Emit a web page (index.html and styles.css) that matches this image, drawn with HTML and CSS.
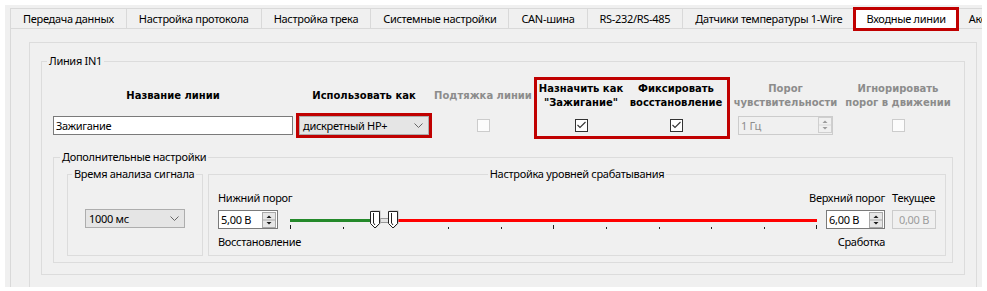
FILE: index.html
```html
<!DOCTYPE html>
<html lang="ru">
<head>
<meta charset="utf-8">
<title>Входные линии</title>
<link rel="stylesheet" href="styles.css">
</head>
<body>
<div class="window">
  <div class="tabs">
    <div class="tab">Передача данных</div>
    <div class="tab">Настройка протокола</div>
    <div class="tab">Настройка трека</div>
    <div class="tab">Системные настройки</div>
    <div class="tab">CAN-шина</div>
    <div class="tab">RS-232/RS-485</div>
    <div class="tab">Датчики температуры 1-Wire</div>
    <div class="tab active">Входные линии</div>
    <div class="tab">Акселерометр</div>
  </div>
  <div class="panel">
    <div class="frame">
      <fieldset class="group in1">
        <legend>Линия IN1</legend>
        <div class="in1-body">
          <div class="line-row">
            <div class="col c-name">
              <div class="hdr">Название линии</div>
              <div class="ctl"><div class="textbox">Зажигание</div></div>
            </div>
            <div class="col c-use">
              <div class="hdr">Использовать как</div>
              <div class="ctl">
                <div class="combo marked">
                  <span>дискретный НР+</span>
                  <svg class="chev" width="9" height="5" viewBox="0 0 9 5"><polyline points="0.5,0.5 4.5,4.5 8.5,0.5" fill="none" stroke="#666" stroke-width="1"/></svg>
                </div>
              </div>
            </div>
            <div class="col c-pull">
              <div class="hdr dis">Подтяжка линии</div>
              <div class="ctl"><div class="check disabled"></div></div>
            </div>
            <div class="hl-box">
              <div class="col c-ign">
                <div class="hdr">Назначить как<br>"Зажигание"</div>
                <div class="ctl">
                  <div class="check on"><svg width="11" height="11" viewBox="0 0 11 11"><polyline points="1.5,5 4,7.5 9.5,2" fill="none" stroke="#333" stroke-width="1.1"/></svg></div>
                </div>
              </div>
              <div class="col c-fix">
                <div class="hdr">Фиксировать<br>восстановление</div>
                <div class="ctl">
                  <div class="check on"><svg width="11" height="11" viewBox="0 0 11 11"><polyline points="1.5,5 4,7.5 9.5,2" fill="none" stroke="#333" stroke-width="1.1"/></svg></div>
                </div>
              </div>
            </div>
            <div class="col c-sens">
              <div class="hdr dis">Порог<br>чувствительности</div>
              <div class="ctl">
                <div class="spin disabled">
                  <span class="val">1 Гц</span>
                  <svg class="spin-btn" width="14" height="16" viewBox="0 0 14 16"><rect x="0.5" y="0.5" width="13" height="15" fill="#f0f0f0" stroke="#cfcfcf"/><line x1="1" y1="8" x2="13" y2="8" stroke="#d8d8d8"/><polygon points="4.5,6 9.5,6 7,3.5" fill="#9a9a9a"/><polygon points="4.5,10 9.5,10 7,12.5" fill="#9a9a9a"/></svg>
                </div>
              </div>
            </div>
            <div class="col c-ignm">
              <div class="hdr dis">Игнорировать<br>порог в движении</div>
              <div class="ctl"><div class="check disabled"></div></div>
            </div>
          </div>

          <fieldset class="group extra">
            <legend>Дополнительные настройки</legend>
            <div class="extra-body">
              <fieldset class="group time">
                <legend>Время анализа сигнала</legend>
                <div class="time-body">
                  <div class="combo small">
                    <span>1000 мс</span>
                    <svg class="chev" width="9" height="5" viewBox="0 0 9 5"><polyline points="0.5,0.5 4.5,4.5 8.5,0.5" fill="none" stroke="#666" stroke-width="1"/></svg>
                  </div>
                </div>
              </fieldset>
              <fieldset class="group levels">
                <legend>Настройка уровней срабатывания</legend>
                <div class="levels-body">
                  <div class="lbl">Нижний порог</div>
                  <div></div>
                  <div class="lbl right">Верхний порог</div>
                  <div class="lbl">Текущее</div>

                  <div class="spin">
                    <span class="val">5,00 В</span>
                    <svg class="spin-btn" width="14" height="16" viewBox="0 0 14 16"><rect x="0.5" y="0.5" width="13" height="15" fill="#e6e6e6" stroke="#a8a8a8"/><line x1="1" y1="8" x2="13" y2="8" stroke="#a8a8a8"/><polygon points="4.5,6 9.5,6 7,3.5" fill="#1a1a1a"/><polygon points="4.5,10 9.5,10 7,12.5" fill="#1a1a1a"/></svg>
                  </div>
                  <div class="slider">
                    <svg width="527" height="20" viewBox="0 0 527 20">
                      <line x1="0" y1="10.5" x2="81" y2="10.5" stroke="#24892a" stroke-width="3"/>
                      <line x1="108" y1="10.5" x2="527" y2="10.5" stroke="#ff0000" stroke-width="3"/>
                      <rect x="90.5" y="8.5" width="8" height="4" fill="#e4e4e4" stroke="#9a9a9a"/>
                      <g stroke="#222" stroke-width="1">
                        <line x1="0.5" y1="15" x2="0.5" y2="19"/>
                        <line x1="53.5" y1="17" x2="53.5" y2="19"/>
                        <line x1="158.5" y1="17" x2="158.5" y2="19"/>
                        <line x1="211.5" y1="17" x2="211.5" y2="19"/>
                        <line x1="263.5" y1="15" x2="263.5" y2="19"/>
                        <line x1="316.5" y1="17" x2="316.5" y2="19"/>
                        <line x1="369.5" y1="17" x2="369.5" y2="19"/>
                        <line x1="421.5" y1="17" x2="421.5" y2="19"/>
                        <line x1="474.5" y1="17" x2="474.5" y2="19"/>
                        <line x1="526.5" y1="15" x2="526.5" y2="19"/>
                      </g>
                      <g transform="translate(80,0)">
                        <path d="M1.5,0.5 H10.5 V13.5 L6,18 L1.5,13.5 Z" fill="#b8b8b8"/>
                        <path d="M0.5,1.5 H9.5 V13.5 L5,18 L0.5,13.5 Z" fill="#fff" stroke="#222"/>
                        <path d="M3.5,3 V13 L5,15" fill="none" stroke="#222"/>
                      </g>
                      <g transform="translate(98,0)">
                        <path d="M1.5,0.5 H10.5 V13.5 L6,18 L1.5,13.5 Z" fill="#b8b8b8"/>
                        <path d="M0.5,1.5 H9.5 V13.5 L5,18 L0.5,13.5 Z" fill="#fff" stroke="#222"/>
                        <path d="M3.5,3 V13 L5,15" fill="none" stroke="#222"/>
                      </g>
                    </svg>
                  </div>
                  <div class="spin">
                    <span class="val">6,00 В</span>
                    <svg class="spin-btn" width="14" height="16" viewBox="0 0 14 16"><rect x="0.5" y="0.5" width="13" height="15" fill="#e6e6e6" stroke="#a8a8a8"/><line x1="1" y1="8" x2="13" y2="8" stroke="#a8a8a8"/><polygon points="4.5,6 9.5,6 7,3.5" fill="#1a1a1a"/><polygon points="4.5,10 9.5,10 7,12.5" fill="#1a1a1a"/></svg>
                  </div>
                  <div class="readout">0,00 В</div>

                  <div class="lbl">Восстановление</div>
                  <div></div>
                  <div class="lbl right">Сработка</div>
                  <div></div>
                </div>
              </fieldset>
            </div>
          </fieldset>
        </div>
      </fieldset>
    </div>
  </div>
</div>
</body>
</html>
```

FILE: styles.css
```css
* { box-sizing: border-box; }

body {
  margin: 0;
  background: #ffffff;
  font-family: "Noto Sans", "DejaVu Sans", sans-serif;
  font-size: 11px;
  letter-spacing: -0.3px;
  color: #000;
}

.window {
  margin: 5px 0 0 5px;
  width: 977px;
  height: 282px;
  background: #f0f0f0;
  overflow: hidden;
}

/* ---------- tabs ---------- */
.tabs {
  display: flex;
  align-items: flex-start;
  padding: 3px 0 0 5px;
  white-space: nowrap;
  position: relative;
  z-index: 1;
}

.tab {
  flex: none;
  height: 20px;
  padding: 2px 12px 0;
  line-height: 16px;
  border: 1px solid #d9d9d9;
  border-bottom: none;
  margin-right: -1px;
  background: #f0f0f0;
}

.tab.active {
  position: relative;
  z-index: 2;
  height: 24px;
  margin: -1px -3px -3px -1px;
  padding: 1px 10px 0;
  line-height: 16px;
  border: 3px solid #c00000;
  background: #fff;
}

/* ---------- panel / frame ---------- */
.panel {
  margin-left: 5px;
  height: 270px;
  border-top: 1px solid #d9d9d9;
  border-left: 1px solid #d9d9d9;
  padding: 13px 0 0 18px;
}

.frame {
  width: 948px;
  height: 300px;
  border: 1px solid #dcdcdc;
  padding: 11px 11px 0;
}

/* ---------- group boxes ---------- */
.group {
  margin: 0;
  padding: 0;
  min-width: 0;
  border: 1px solid #dcdcdc;
}

.group > legend {
  padding: 0 2px;
  line-height: 14px;
  white-space: nowrap;
}

.in1 > legend { margin-left: 5px; }

.in1-body {
  padding: 9px 11px 11px;
}

/* ---------- line row ---------- */
.line-row {
  display: flex;
  align-items: flex-start;
}

.col {
  flex: none;
  display: flex;
  flex-direction: column;
  align-items: center;
  padding: 5px 0 4px;
}

.hdr {
  height: 28px;
  display: flex;
  align-items: center;
  justify-content: center;
  text-align: center;
  white-space: nowrap;
  font-family: "DejaVu Sans", sans-serif;
  font-weight: bold;
  font-size: 10px;
  letter-spacing: 0;
  line-height: 14px;
  color: #000;
}

.hdr.dis { color: #8c8c8c; }

.ctl {
  margin-top: 5px;
  height: 20px;
  display: flex;
  align-items: center;
  justify-content: center;
}

.c-name { width: 240px; }
.c-use  { width: 136px; margin-left: 3px; }
.c-pull { width: 102px; }
.c-ign  { width: 88px; }
.c-fix  { width: 102px; }
.c-sens { width: 111px; }
.c-ignm { width: 114px; }

.hl-box {
  flex: none;
  display: flex;
  position: relative;
  border: 3px solid #c00000;
  background: #f0f0f0;
}

.hl-box .col { padding: 2px 0 1px; }

/* ---------- widgets ---------- */
.textbox {
  width: 240px;
  height: 19px;
  border: 1px solid #7a7a7a;
  background: #fff;
  padding-left: 2px;
  line-height: 17px;
  white-space: nowrap;
}

.combo {
  display: flex;
  align-items: center;
  justify-content: space-between;
  height: 19px;
  border: 1px solid #adadad;
  background: #e5e5e5;
  padding: 0 5px 0 3px;
  white-space: nowrap;
}

.combo.marked {
  width: 130px;
  outline: 3px solid #c00000;
}

.combo.small { width: 100px; }

.chev { flex: none; }

.check {
  width: 13px;
  height: 13px;
  border: 1px solid #333;
  background: #fff;
  display: flex;
  align-items: center;
  justify-content: center;
}

.check.disabled {
  border-color: #cccccc;
  background: #fcfcfc;
}

.spin {
  display: flex;
  align-items: center;
  height: 19px;
  border: 1px solid #7a7a7a;
  background: #fff;
  padding: 0 1px 0 2px;
  white-space: nowrap;
}

.spin .val { flex: 1; }

.spin-btn { flex: none; }

.spin.disabled {
  width: 95px;
  border-color: #cccccc;
  background: #f0f0f0;
  color: #8d8d8d;
  padding-right: 0;
}

/* ---------- additional settings ---------- */
.extra { margin-top: 11px; }
.extra > legend { margin-left: 6px; }

.extra-body {
  display: flex;
  gap: 5px;
  padding: 3px 6px 6px 13px;
}

.time {
  flex: none;
  width: 136px;
}
.time > legend { margin-left: 4px; }

.time-body {
  display: flex;
  justify-content: center;
  padding-top: 28px;
}

.levels { flex: 1; }
.levels > legend { margin: 0 auto; }

.levels-body {
  display: grid;
  grid-template-columns: 60px 1fr 59px 44px;
  grid-template-rows: 14px 20px 14px;
  column-gap: 7px;
  row-gap: 5px;
  padding: 10px 9px 6px;
}

.lbl {
  line-height: 14px;
  white-space: nowrap;
}

.lbl.right { justify-self: end; }

.levels-body .spin { height: 19px; }

.slider {
  padding-left: 5px;
}

.slider svg { display: block; }

.readout {
  height: 19px;
  border: 1px solid #cccccc;
  background: #f0f0f0;
  color: #9c9c9c;
  text-align: center;
  line-height: 17px;
  white-space: nowrap;
}
```
